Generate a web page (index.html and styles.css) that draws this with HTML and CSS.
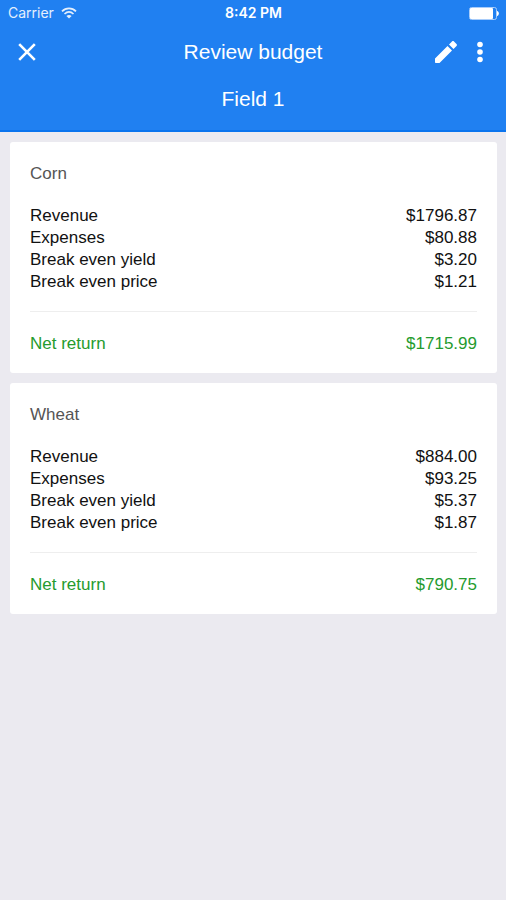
FILE: index.html
```html
<!DOCTYPE html>
<html lang="en">
<head>
<meta charset="utf-8">
<meta name="viewport" content="width=device-width, initial-scale=1">
<title>Review budget</title>
<link rel="stylesheet" href="styles.css">
</head>
<body>
<header class="header">
  <div class="status">
    <div class="carrier">
      <span>Carrier</span>
      <svg width="16" height="12" viewBox="0 0 16 12" fill="none" stroke="currentColor" stroke-width="1.7" aria-hidden="true">
        <path d="M1 4.4C5 .4 11 .4 15 4.4M3.5 7C6.2 4.5 9.8 4.5 12.5 7"/>
        <path d="M8 11.6 5.4 9C7 7.7 9 7.7 10.6 9Z" fill="currentColor" stroke="none"/>
      </svg>
    </div>
    <span class="time">8:42 PM</span>
    <svg class="battery" width="30" height="13" viewBox="0 0 30 13" aria-hidden="true">
      <rect x=".5" y=".5" width="27" height="12" rx="2" fill="none" stroke="#a9cdfa"/>
      <rect x="1" y="1" width="23" height="11" rx="1" fill="#fff"/>
      <path d="M28 4c2.500.5 2.500 4.500 0 5z" fill="#fff"/>
    </svg>
  </div>
  <div class="bar">
    <button class="icon-button" type="button" aria-label="Close">
      <svg width="18" height="18" viewBox="0 0 18 18" fill="none" stroke="currentColor" stroke-width="2.600"><path d="M1.200 1.200 16.800 16.800M16.800 1.200 1.200 16.800"/></svg>
    </button>
    <h1 class="title">Review budget</h1>
    <div class="actions">
      <button class="icon-button" type="button" aria-label="Edit">
        <svg width="24" height="24" viewBox="0 0 24 24" fill="currentColor"><path d="M1 18.500V22.300q0 .7.7.7H5.500L18 10.500 13.500 6ZM22.500 6c.6-.6.6-1.400 0-2L20 1.500c-.6-.6-1.400-.6-2 0l-3 3 4.500 4.500Z"/></svg>
      </button>
      <button class="icon-button" type="button" aria-label="More options">
        <svg width="8" height="22" viewBox="0 0 8 22" fill="currentColor"><circle cx="4" cy="3.500" r="2.800"/><circle cx="4" cy="11" r="2.800"/><circle cx="4" cy="18.500" r="2.800"/></svg>
      </button>
    </div>
  </div>
  <p class="subtitle">Field 1</p>
</header>
<main class="cards">
  <section class="card">
    <h2 class="crop" id="corn">Corn</h2>
    <table class="budget" aria-labelledby="corn">
      <tbody>
        <tr><th scope="row">Revenue</th><td>$1796.87</td></tr>
        <tr><th scope="row">Expenses</th><td>$80.88</td></tr>
        <tr><th scope="row">Break even yield</th><td>$3.20</td></tr>
        <tr><th scope="row">Break even price</th><td>$1.21</td></tr>
      </tbody>
      <tfoot>
        <tr><th scope="row">Net return</th><td>$1715.99</td></tr>
      </tfoot>
    </table>
  </section>
  <section class="card">
    <h2 class="crop" id="wheat">Wheat</h2>
    <table class="budget" aria-labelledby="wheat">
      <tbody>
        <tr><th scope="row">Revenue</th><td>$884.00</td></tr>
        <tr><th scope="row">Expenses</th><td>$93.25</td></tr>
        <tr><th scope="row">Break even yield</th><td>$5.37</td></tr>
        <tr><th scope="row">Break even price</th><td>$1.87</td></tr>
      </tbody>
      <tfoot>
        <tr><th scope="row">Net return</th><td>$790.75</td></tr>
      </tfoot>
    </table>
  </section>
</main>
</body>
</html>
```
FILE: styles.css
```css
* {
  box-sizing: border-box;
}

body {
  margin: 0;
  background: #ebeaf0;
  color: #111;
  font: 17px/22px "Liberation Sans", Arial, sans-serif;
}

svg {
  display: block;
}

.header {
  padding-bottom: 10px;
  border-bottom: 2px solid #0a74ee;
  background: #2080f1;
  color: #fff;
}

.status,
.bar {
  display: grid;
  grid-template-columns: 1fr auto 1fr;
  align-items: center;
}

.status {
  height: 26px;
  padding: 0 7px 0 8px;
  font: 14px/26px Inter, sans-serif;
}

.carrier {
  display: flex;
  align-items: center;
  gap: 7px;
  color: #e4effd;
}

.time {
  font-weight: 600;
}

.battery {
  justify-self: end;
}

.bar {
  height: 52px;
  padding: 0 16px;
}

.icon-button {
  justify-self: start;
  padding: 0;
  border: 0;
  background: none;
  color: inherit;
  cursor: pointer;
}

.bar > .icon-button {
  padding: 0 2px;
}

.title,
.subtitle {
  margin: 0;
  font-size: 21px;
  font-weight: 400;
  line-height: 42px;
  text-align: center;
}

.actions {
  display: flex;
  align-items: center;
  justify-content: flex-end;
  gap: 18px;
  padding-right: 6px;
}

.cards {
  display: grid;
  gap: 10px;
  padding: 10px 9px 10px 10px;
}

.card {
  padding: 21px 20px 18px;
  border-radius: 3px;
  background: #fff;
}

.crop {
  margin: 0 0 20px;
  color: #555;
  font-size: 17px;
  font-weight: 400;
}

.budget {
  width: 100%;
  border-collapse: collapse;
}

.budget th,
.budget td {
  padding: 0;
  font-weight: 400;
  text-align: left;
}

.budget td {
  text-align: right;
}

.budget tbody tr:last-child > * {
  padding-bottom: 18px;
}

.budget tfoot {
  color: #259b2e;
}

.budget tfoot tr > * {
  padding-top: 21px;
  border-top: 1px solid #eee;
}
```
